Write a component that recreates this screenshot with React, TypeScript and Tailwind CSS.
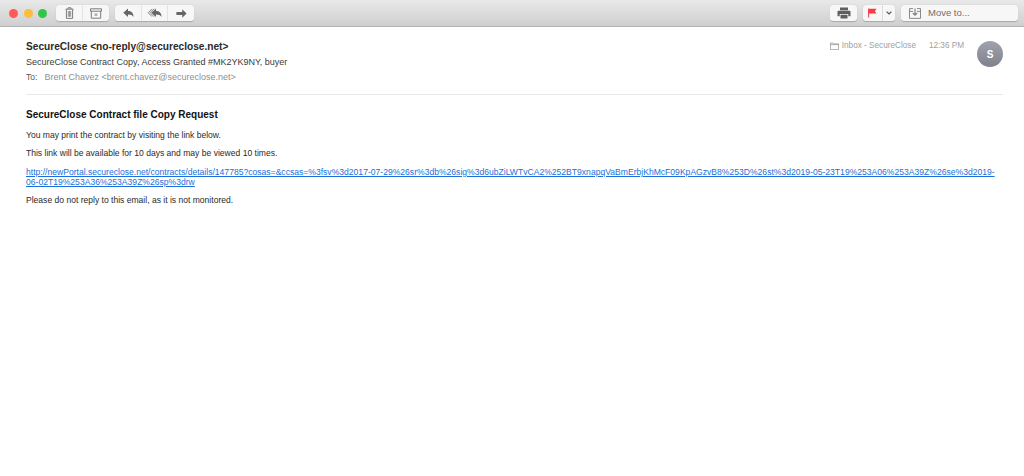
import React from "react";

const Btn = ({ className = "", children }: { className?: string; children?: React.ReactNode }) => (
  <div className={`flex h-full items-center justify-center ${className}`}>{children}</div>
);

const Group = ({ className = "", children }: { className?: string; children: React.ReactNode }) => (
  <div className={`flex h-[16px] overflow-hidden rounded-[3px] bg-[#f7f7f7] shadow-[0_0.5px_1px_rgba(0,0,0,0.2)] ${className}`}>{children}</div>
);

const Trash = () => (
  <svg width="9" height="12" viewBox="0 0 9 12" fill="none" stroke="#7a7a7a" strokeWidth="1">
    <path d="M0.5 2.2h8M3 2V0.8h3V2M1.4 2.4v9h6.2v-9" />
    <path d="M3.3 4v5.8M4.5 4v5.8M5.7 4v5.8" strokeWidth="0.8" />
  </svg>
);

const Archive = () => (
  <svg width="12" height="11" viewBox="0 0 12 11" fill="none" stroke="#7a7a7a" strokeWidth="1">
    <path d="M0.5 0.8h11v2.4h-11zM1.3 3.2v7h9.4v-7" />
    <path d="M4.8 5.4l2.4 2.4M7.2 5.4L4.8 7.8" />
  </svg>
);

const Reply = () => (
  <svg width="11" height="10" viewBox="0 0 11 10" fill="#666">
    <path d="M5 0.5v2.6c3.4 0 5.4 1.8 5.6 6-1-2-2.6-2.7-5.6-2.7v2.6L0.3 4.7z" />
  </svg>
);

const ReplyAll = () => (
  <svg width="15" height="10" viewBox="0 0 15 10" fill="#666">
    <path d="M9 0.5v2.6c3.4 0 5.4 1.8 5.6 6-1-2-2.6-2.7-5.6-2.7v2.6L4.3 4.7z" />
    <path d="M5 0.8L1.2 4.7 5 8.6" fill="none" stroke="#888" strokeWidth="1" />
    <path d="M7 0.8L3.2 4.7 7 8.6" fill="none" stroke="#888" strokeWidth="1" />
  </svg>
);

const Forward = () => (
  <svg width="11" height="9" viewBox="0 0 11 9" fill="#666">
    <path d="M6.2 0.3l4.4 4.2-4.4 4.2V6H0.4V3h5.8z" />
  </svg>
);

const Printer = () => (
  <svg width="14" height="12" viewBox="0 0 14 12" fill="#5f5f5f">
    <path d="M3 0.5h8v2.7H3z" />
    <path d="M1.5 3.8h11c.6 0 1 .4 1 1v4.4h-2.2V7H2.7v2.2H0.5V4.8c0-.6.4-1 1-1z" />
    <path d="M3.5 7.8h7v3.7h-7z" />
  </svg>
);

const Flag = () => (
  <svg width="9" height="10" viewBox="0 0 9 10">
    <path d="M0.6 0.4v9.2" stroke="#f4444c" strokeWidth="1.1" />
    <path d="M1 0.8h7.6L6.9 3.2l1.7 2.4H1z" fill="#fb3b43" />
  </svg>
);

const MoveIcon = () => (
  <svg width="12" height="11" viewBox="0 0 12 11" fill="none" stroke="#7d7d7d" strokeWidth="0.9">
    <path d="M4 0.6H0.5v9.8h11V0.6H8" />
    <path d="M0.5 3.4H4M8 3.4h3.5" />
    <path d="M6 0.4v6.4M3.8 5l2.2 2.2L8.2 5" strokeWidth="1.1" />
  </svg>
);

const FolderIcon = () => (
  <svg width="9" height="8" viewBox="0 0 9 8" fill="none" stroke="#8c8c8c" strokeWidth="0.7">
    <path d="M0.4 1h3l0.7 0.9h4.5v5.7H0.4z" />
    <path d="M0.4 2.6h8.2" />
  </svg>
);

const link1 =
  "http://newPortal.secureclose.net/contracts/details/147785?cosas=&ccsas=%3fsv%3d2017-07-29%26sr%3db%26sig%3d6ubZiLWTvCA2%252BT9xnapqVaBmErbjKhMcF09KpAGzvB8%253D%26st%3d2019-05-23T19%253A06%253A39Z%26se%3d2019-";
const link2 = "06-02T19%253A36%253A39Z%26sp%3drw";

export default function App() {
  return (
    <div className="flex h-[476px] w-[1024px] flex-col overflow-hidden bg-white font-['Liberation_Sans',Arial,sans-serif]">
      <header className="flex h-[27px] shrink-0 items-center justify-between border-b border-[#b4b4b4] bg-gradient-to-b from-[#e9e9e9] to-[#cfcfcf] pl-[9px] pr-[6px]">
        <div className="flex items-center">
          <div className="flex gap-[5.5px]">
            <span className="h-[9px] w-[9px] rounded-full bg-[#fc5b57]" />
            <span className="h-[9px] w-[9px] rounded-full bg-[#fcbc3c]" />
            <span className="h-[9px] w-[9px] rounded-full bg-[#30c748]" />
          </div>
          <Group className="ml-[9px] w-[53px]">
            <Btn className="w-[27px] border-r border-[#e4e4e4]"><Trash /></Btn>
            <Btn className="flex-1"><Archive /></Btn>
          </Group>
          <Group className="ml-[6px] w-[79px]">
            <Btn className="w-[27px] border-r border-[#e4e4e4]"><Reply /></Btn>
            <Btn className="w-[26px] border-r border-[#e4e4e4]"><ReplyAll /></Btn>
            <Btn className="flex-1"><Forward /></Btn>
          </Group>
        </div>
        <div className="flex items-center">
          <Group className="w-[27px]">
            <Btn className="flex-1"><Printer /></Btn>
          </Group>
          <Group className="ml-[6px] w-[32px]">
            <Btn className="w-[20px] border-r border-[#dcdcdc]"><Flag /></Btn>
            <Btn className="flex-1">
              <svg width="6" height="4" viewBox="0 0 6 4" fill="none" stroke="#555" strokeWidth="1.2"><path d="M0.6 0.6L3 3l2.4-2.4" /></svg>
            </Btn>
          </Group>
          <Group className="ml-[6px] w-[117px] items-center pl-[8px]">
            <MoveIcon />
            <span className="ml-[7px] text-[9.5px] leading-none text-[#6e6e6e]">Move to...</span>
          </Group>
        </div>
      </header>

      <main className="flex-1 pl-[26px] pr-[21px]">
        <section className="flex h-[68px] justify-between border-b border-[#e8e8e8]">
          <div className="pt-[13px]">
            <div className="text-[10.15px] font-bold leading-[13px] text-[#2a2a2a]">SecureClose &lt;no-reply@secureclose.net&gt;</div>
            <div className="mt-[3px] text-[9px] leading-[12px] text-[#3a3a3a]">SecureClose Contract Copy, Access Granted #MK2YK9NY, buyer</div>
            <div className="mt-[3px] flex text-[9px] leading-[12px]">
              <span className="w-[18.5px] text-[8.5px] text-[#555]">To:</span>
              <span className="text-[#8f8f8f]">Brent Chavez &lt;brent.chavez@secureclose.net&gt;</span>
            </div>
          </div>
          <div className="flex items-start pt-[14px]">
            <div className="flex items-center text-[8.2px] leading-[10px] text-[#a0a0a0]">
              <FolderIcon />
              <span className="ml-[3px]">Inbox - SecureClose</span>
              <span className="ml-[13px]">12:36 PM</span>
            </div>
            <div className="ml-[13px] flex h-[26px] w-[26px] items-center justify-center rounded-full bg-gradient-to-b from-[#a0a3ad] to-[#7f828c] text-[10px] font-bold text-white">S</div>
          </div>
        </section>

        <h1 className="mt-[13px] text-[10px] font-bold leading-[13px] text-[#111]">SecureClose Contract file Copy Request</h1>
        <p className="mt-[9px] text-[8.55px] leading-[10px] text-[#2a2a2a]">You may print the contract by visiting the link below.</p>
        <p className="mt-[8px] text-[8.55px] leading-[10px] text-[#2a2a2a]">This link will be available for 10 days and may be viewed 10 times.</p>
        <a className="mt-[9px] block whitespace-nowrap text-[8.58px] leading-[10px] text-[#1a6fdc] underline">
          {link1}
          <br />
          {link2}
        </a>
        <p className="mt-[8px] text-[8.55px] leading-[10px] text-[#2a2a2a]">Please do not reply to this email, as it is not monitored.</p>
      </main>
    </div>
  );
}
